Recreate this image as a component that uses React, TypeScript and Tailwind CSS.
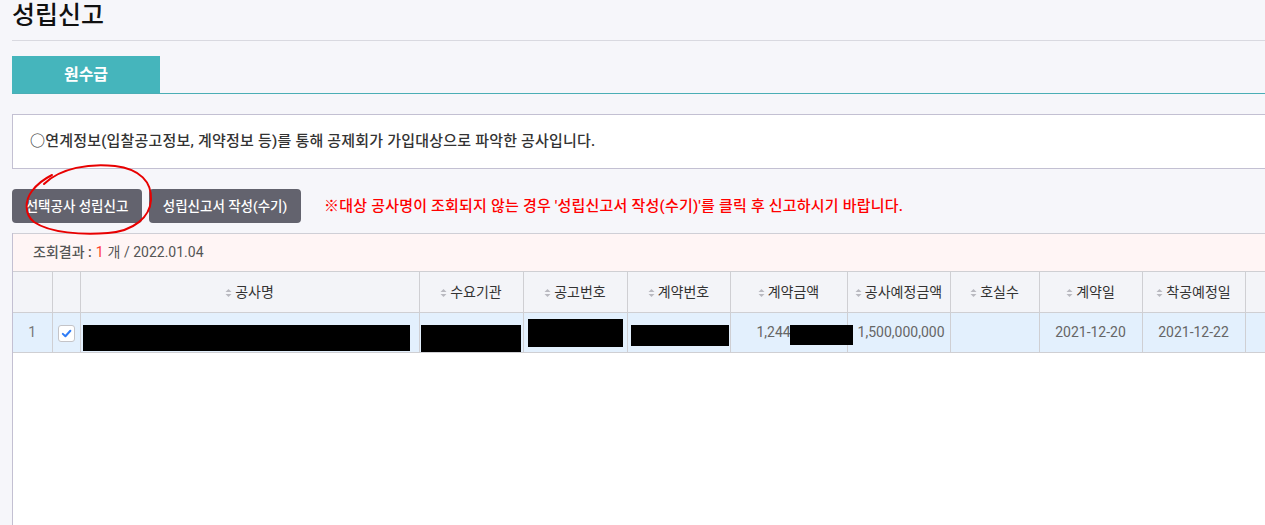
import React from 'react';

const FONT = "font-['Roboto','Noto_Sans_CJK_KR',sans-serif]";

const columns = [
  { key: 'no', label: '', width: 39, sort: false },
  { key: 'chk', label: '', width: 28, sort: false },
  { key: 'name', label: '공사명', width: 339, sort: true },
  { key: 'org', label: '수요기관', width: 104, sort: true },
  { key: 'notice', label: '공고번호', width: 104, sort: true },
  { key: 'contract', label: '계약번호', width: 103, sort: true },
  { key: 'amount', label: '계약금액', width: 117, sort: true },
  { key: 'plan', label: '공사예정금액', width: 103, sort: true },
  { key: 'rooms', label: '호실수', width: 89, sort: true },
  { key: 'cdate', label: '계약일', width: 103, sort: true },
  { key: 'sdate', label: '착공예정일', width: 103, sort: true },
  { key: 'extra', label: '', width: 60, sort: false },
];

function SortIcon() {
  return (
    <svg className="w-[7px] h-[10px] mr-[3px] inline-block" viewBox="0 0 7 10" fill="#b9b9c0">
      <path d="M3.5 1 L6.5 4 L0.5 4 Z" />
      <path d="M3.5 9 L6.5 6 L0.5 6 Z" />
    </svg>
  );
}

function Redact({ className }: { className: string }) {
  return <div className={`absolute bg-black ${className}`} />;
}

export default function App() {
  return (
    <div className={`w-full h-[525px] overflow-hidden bg-[#f6f6fa] ${FONT} relative`}>
      <div className="w-[1300px] pl-[12px]">
        <h1 className="text-[25px] leading-[30px] font-medium text-[#111] pt-[1px] pb-[9px] border-b border-[#d9d9e0]">성립신고</h1>

        <div className="mt-[15px] flex border-b border-[#4aaeb5]">
          <div className="w-[148px] h-[37px] bg-[#45b5bc] text-white text-[16px] font-bold flex items-center justify-center">원수급</div>
        </div>

        <div className="mt-[20px] h-[55px] bg-white border border-[#c3c0d2] flex items-center pl-[17px] text-[15px] font-medium text-[#333] tracking-[0.2px]">
          ○연계정보(입찰공고정보, 계약정보 등)를 통해 공제회가 가입대상으로 파악한 공사입니다.
        </div>

        <div className="mt-[20px] flex items-center gap-[7px]">
          <button className="h-[34px] w-[130px] rounded-[4px] bg-[#63636e] text-white text-[13.5px] font-medium">선택공사 성립신고</button>
          <button className="h-[34px] w-[152px] rounded-[4px] bg-[#63636e] text-white text-[13.5px] font-medium">성립신고서 작성(수기)</button>
          <span className="ml-[16px] text-[15px] font-medium text-[#ff0000] tracking-[0.2px]">※대상 공사명이 조회되지 않는 경우 '성립신고서 작성(수기)'를 클릭 후 신고하시기 바랍니다.</span>
        </div>

        <div className="mt-[10px] border-l border-[#c3c0d2] bg-white h-[300px]">
          <div className="h-[38px] bg-[#fff5f5] border-t border-[#cfcfd6] flex items-center pl-[20px] text-[14px] text-[#555]">
            <span className="font-medium">조회결과 :</span>
            <span className="ml-[4px] text-[#ff3b30]">1</span>
            <span className="ml-[4px]">개 / 2022.01.04</span>
          </div>
          <table className="table-fixed border-collapse w-[1292px]">
            <colgroup>
              {columns.map((c) => (
                <col key={c.key} style={{ width: c.width }} />
              ))}
            </colgroup>
            <thead>
              <tr className="h-[41px] bg-[#f3f4f8]">
                {columns.map((c, i) => (
                  <th
                    key={c.key}
                    className={`border-t border-b border-[#cfcfd3] ${i > 0 ? 'border-l' : ''} text-[14px] font-normal text-[#333] text-center whitespace-nowrap`}
                  >
                    {c.sort && <SortIcon />}
                    {c.label}
                  </th>
                ))}
              </tr>
            </thead>
            <tbody>
              <tr className="h-[40px] bg-[#e3f0fd] text-[14px] text-[#666]">
                <td className="border-b border-[#cfcfd3] text-center text-[#777]">1</td>
                <td className="border-b border-l border-[#cfcfd3] text-center">
                  <span className="inline-flex items-center justify-center w-[17px] h-[17px] rounded-[3px] bg-white border border-[#c4c4c8] align-middle">
                    <svg viewBox="0 0 12 12" className="w-[11px] h-[11px]">
                      <path d="M2 6.4 L4.8 9 L10.2 3" fill="none" stroke="#2f7cf6" strokeWidth="2.2" strokeLinecap="round" strokeLinejoin="round" />
                    </svg>
                  </span>
                </td>
                <td className="border-b border-l border-[#cfcfd3] relative">
                  <Redact className="left-[2px] top-[12px] w-[327px] h-[26px]" />
                </td>
                <td className="border-b border-l border-[#cfcfd3] relative">
                  <Redact className="left-[1px] top-[12px] w-[100px] h-[27px]" />
                </td>
                <td className="border-b border-l border-[#cfcfd3] relative">
                  <Redact className="left-[4px] top-[6px] w-[95px] h-[28px]" />
                </td>
                <td className="border-b border-l border-[#cfcfd3] relative">
                  <Redact className="left-[3px] top-[12px] w-[98px] h-[21px]" />
                </td>
                <td className="border-b border-l border-[#cfcfd3] relative pl-[26px] text-left">
                  1,244
                  <Redact className="left-[59px] top-[12px] w-[63px] h-[20px] z-10" />
                </td>
                <td className="border-b border-l border-[#cfcfd3] text-right pr-[5px]">1,500,000,000</td>
                <td className="border-b border-l border-[#cfcfd3]"></td>
                <td className="border-b border-l border-[#cfcfd3] text-center">2021-12-20</td>
                <td className="border-b border-l border-[#cfcfd3] text-center">2021-12-22</td>
                <td className="border-b border-l border-[#cfcfd3]"></td>
              </tr>
            </tbody>
          </table>
        </div>
      </div>

      <svg className="absolute left-0 top-0 pointer-events-none" width="200" height="260" viewBox="0 0 200 260">
        <path
          d="M44 184 C60 168 90 163 115 166 C140 169 152 182 151 200 C150 217 134 231 108 233 C82 235 50 233 34 222 C24 214 25 200 32 191 C38 183 46 178 52 175"
          fill="none"
          stroke="#e80000"
          strokeWidth="2"
          strokeLinecap="round"
        />
      </svg>
    </div>
  );
}
